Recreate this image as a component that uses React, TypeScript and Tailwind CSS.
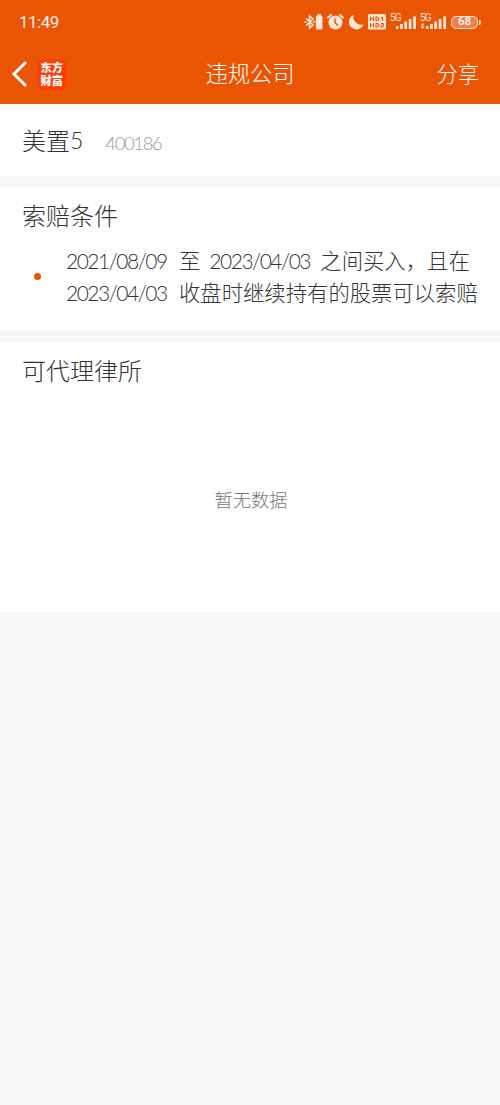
import React from 'react';

const CN = "font-['Noto_Sans_CJK_SC',sans-serif]";
const NUM = "font-['Lato','Noto_Sans_CJK_SC',sans-serif]";

const conditions = [
    { id: 1, from: '2021/08/09', to: '2023/04/03' },
];

const DateText = ({ value }: { value: string }) => (
    <span className={`${NUM} inline-block w-[101px] -ml-px mr-px text-[21px] tracking-[-1.5px]`}>{value}</span>
);

const Signal = ({ dots }: { dots?: boolean }) => (
    <svg className="w-[27px] h-[18px] shrink-0" viewBox="0 0 27 18" fill="#ffe6d6">
        <text x="0" y="8" fontSize="10" fontWeight="400" fontFamily="Roboto, sans-serif" textLength="11.5">5G</text>
        <rect x="6" y="13" width="2.5" height="3" />
        {dots && <path d="M.5 12.5 2.5 10l2 2.5zM.5 13.5h4L2.5 16z" />}
        <rect x="10" y="11" width="2.8" height="5" />
        <rect x="14.3" y="8.5" width="2.8" height="7.5" />
        <rect x="18.7" y="6" width="2.8" height="10" />
        <rect x="23.2" y="3.5" width="2.8" height="12.5" />
    </svg>
);

const StatusBar = () => (
    <div className="h-[44px] flex items-center pl-[19px] pr-[19px]">
        <span className="font-['Roboto',sans-serif] font-normal text-[17px] leading-none tracking-[-0.5px] text-[#fff0e5]">11:49</span>
        <div className="ml-auto flex items-center">
            {/* bluetooth with device battery */}
            <svg className="w-[19px] h-[18px] mr-[4px]" viewBox="0 0 19 18" fill="none" stroke="#ffe6d6" strokeWidth="1.6">
                <path d="M2 5.5 9 12 5.5 15V3L9 6 2 12.5M.5 9h2M8.8 9h2" />
                <rect x="11.8" y="2.5" width="6.7" height="14" rx="1.5" fill="#ffe6d6" stroke="none" />
                <rect x="13.2" y="1.2" width="4" height="2" fill="#ffe6d6" stroke="none" />
            </svg>
            <svg className="w-[17px] h-[18px] mr-[4px]" viewBox="0 0 17 18" fill="none">
                <circle cx="8.5" cy="9.5" r="7" fill="#ffe6d6" />
                <path d="M1 4.5 4 2M16 4.5 13 2" stroke="#ffe6d6" strokeWidth="2" strokeLinecap="round" />
                <path d="M8 5.5v4l3 3" stroke="#ea5504" strokeWidth="1.5" />
            </svg>
            <svg className="w-[16px] h-[18px] mr-[4px]" viewBox="0 0 16 18" fill="#ffe6d6">
                <path d="M5.5 2A7.5 7.5 0 1 0 15.5 11.5 8 8 0 0 1 5.5 2z" />
            </svg>
            <svg className="w-[18px] h-[16px] mr-[4px]" viewBox="0 0 18 16">
                <rect width="18" height="15.5" rx="1.5" fill="#ffe6d6" />
                <g fill="none" stroke="#ea5504" strokeWidth="1.1">
                    <path d="M2.5 2.5v4.5M5.5 2.5v4.5M2.5 4.7h3M8 3h1.5l1.3 1v1.5l-1.3 1H8zM13 3.3h1.5v3.7" />
                    <path d="M2.5 9v4.5M5.5 9v4.5M2.5 11.2h3M8 9.5h1.5l1.3 1V12l-1.3 1H8zM12.8 9.5h2.5v1.7h-2V13h2.5" />
                </g>
            </svg>
            <Signal />
            <div className="w-[3px]" />
            <Signal dots />
            <div className="ml-[4px] w-[27px] h-[13px] rounded-[5px] border-[1.5px] border-[#ffe6d6] bg-[#ef8149] flex items-center justify-center">
                <span className="font-['Roboto',sans-serif] font-medium text-[11.5px] leading-none">68</span>
            </div>
            <div className="w-[2px] h-[5px] ml-[1px] bg-[#ffe6d6] rounded-r" />
        </div>
    </div>
);

const NavBar = () => (
    <div className="h-[60px] flex items-center pl-[11px] pr-[21px]">
        <div className="flex-1 flex items-center">
            <svg className="w-[16px] h-[26px]" viewBox="0 0 16 26" fill="none" stroke="white" strokeWidth="3">
                <path d="M14 2 3 13l11 11" strokeLinecap="round" />
            </svg>
            <div className="ml-[10px] w-[30px] h-[31px] rounded-[6px] bg-[#fc4009] flex items-center justify-center">
                <span className="block w-[23px] break-all text-[11.2px] leading-[13px] font-black">东方财富</span>
            </div>
        </div>
        <h1 className="text-[22.3px] leading-none -mt-[3px] pl-[10px] font-light">违规公司</h1>
        <span className="flex-1 text-right text-[21.3px] leading-none -mt-[3px] font-light">分享</span>
    </div>
);

const App = () => {
    return (
        <div className={`${CN} min-h-screen bg-[#f7f8fa] text-[#333] font-light`} lang="zh-CN">
            <header className="h-[104px] bg-[#ea5504] text-white">
                <StatusBar />
                <NavBar />
            </header>

            <section className="h-[72px] bg-white flex items-center pl-[22px]">
                <span className="text-[24px] leading-none">美置</span>
                <span className={`${NUM} text-[23px] leading-none`}>5</span>
                <span className={`${NUM} ml-[22px] pt-[6px] text-[18.5px] leading-none tracking-[-1.4px] text-[#999]`}>400186</span>
            </section>

            <section className="mt-[11px] h-[144px] bg-white pl-[22px] pt-[15px]">
                <h2 className="text-[24px] leading-[26px]">索赔条件</h2>
                <ul>
                    {conditions.map(item => (
                        <li key={item.id} className="flex items-center pt-[17px] pl-[12px]">
                            <i className="w-[7px] h-[7px] rounded-full bg-[#ea5504] -mt-px" />
                            <div className="ml-[26px] text-[21.35px] leading-[32px]">
                                <p className="h-[32px] flex whitespace-nowrap">
                                    <DateText value={item.from} />
                                    <span className="ml-[11px] mr-[10px] -mt-px">至</span>
                                    <DateText value={item.to} />
                                    <span className="ml-[9px] -mt-px">之间买入，且在</span>
                                </p>
                                <p className="h-[32px] flex whitespace-nowrap">
                                    <DateText value={item.to} />
                                    <span className="ml-[11px] -mt-px">收盘时继续持有的股票可以索赔</span>
                                </p>
                            </div>
                        </li>
                    ))}
                </ul>
            </section>

            <div className="h-[11px] bg-[#f7f7f8]" />

            <section className="h-[270px] bg-white pt-[15px]">
                <h2 className="pl-[22px] text-[24px] leading-[26px]">可代理律所</h2>
                <p className="mt-[103px] pl-[2px] text-center text-[18.3px] leading-[26px] text-[#777]">暂无数据</p>
            </section>
        </div>
    );
};

export default App;
